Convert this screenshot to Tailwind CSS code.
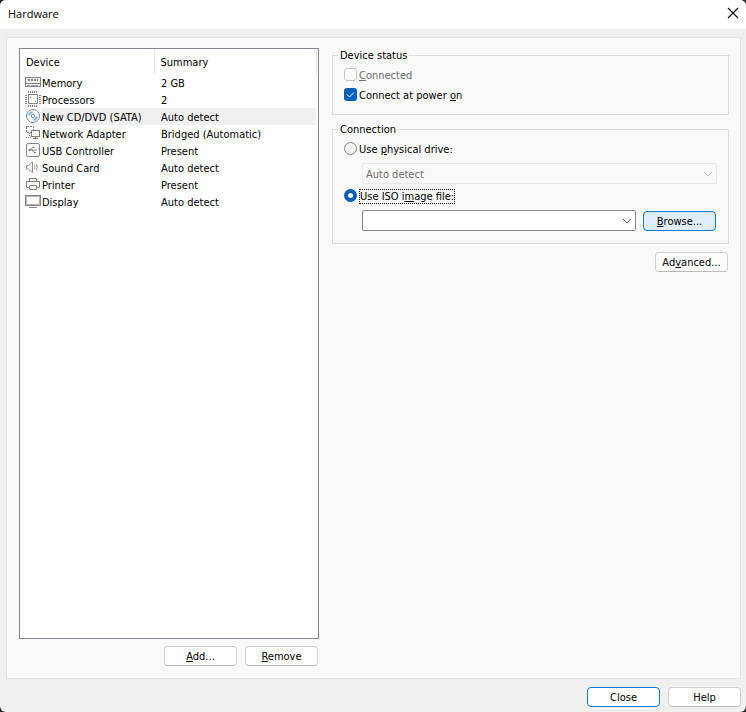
<!DOCTYPE html>
<html lang="en">
<head>
    <meta charset="UTF-8">
    <meta name="viewport" content="width=device-width, initial-scale=1.0">
    <title>Hardware</title>
    <script src="https://cdn.jsdelivr.net/npm/@tailwindcss/browser@4"></script>
</head>
<body class="bg-[#2b2b2b] font-['DejaVu_Sans_Condensed','Noto_Sans',sans-serif] text-[11px] leading-[14px] text-black">

    <div class="min-h-screen flex flex-col bg-[#f0f0f0] rounded-md overflow-hidden">

        <!-- Title bar -->
        <header class="h-[29px] bg-white flex items-center justify-between pl-2 pr-[7px] pb-[3px]">
            <h1 class="pt-[2px] font-['Open_Sans',sans-serif] text-[11px]">Hardware</h1>
            <button type="button" aria-label="Close window">
                <svg class="w-3 h-3" viewBox="0 0 12 12" fill="none" stroke="#111" stroke-width="1.2"><path d="M1 1l10 10M11 1L1 11"/></svg>
            </button>
        </header>

        <!-- Main panel -->
        <main class="flex-1 flex gap-[13px] mt-2 ml-[6px] mr-[5px] pt-[10px] pb-3 pl-3 pr-[11px] bg-[#f9f9f9] border border-[#e5e5e5]">

            <!-- Device list -->
            <section class="w-[300px] shrink-0 flex flex-col">
                <div class="flex-1 bg-white border border-[#828790]">
                    <table class="w-full table-fixed border-collapse text-left">
                        <colgroup>
                            <col class="w-[21px]">
                            <col class="w-[113px]">
                            <col>
                            <col class="w-[2px]">
                        </colgroup>
                        <thead>
                            <tr class="h-[25px]">
                                <th colspan="2" class="p-0 pt-[2px] pl-[6px] font-normal border-r border-[#e5e5e5]">Device</th>
                                <th class="p-0 pt-[2px] pl-[6px] font-normal border-r border-[#e5e5e5]">Summary</th>
                                <th class="p-0"></th>
                            </tr>
                        </thead>
                        <tbody>
                            <tr class="h-[17px]">
                                <td class="p-0 pl-[5px] align-top">
                                    <svg class="w-4 h-4" viewBox="0 0 16 16" fill="none" stroke="#858585" shape-rendering="crispEdges"><path fill="#eee" d="M.5 3.5h15v9H.5z"/><path stroke-width="2" d="M3 6h2M6 6h2M9 6h2M12 6h1"/><path d="M1 9.5h14"/><path stroke="#a5a5a5" d="M2 11.5h3M6 11.5h7"/></svg>
                                </td>
                                <td class="p-0 pt-[2px] pl-[1px] whitespace-nowrap">Memory</td>
                                <td class="p-0 pt-[2px] pl-[7px]">2 GB</td>
                                <td class="p-0"></td>
                            </tr>
                            <tr class="h-[17px]">
                                <td class="p-0 pl-[5px] align-top">
                                    <svg class="w-4 h-4" viewBox="0 0 16 16" fill="none" stroke="#858585" shape-rendering="crispEdges"><path d="M3.5 3.5h9v9h-9z"/><path d="M3.5 0v2M5.5 0v2M7.5 0v2M9.5 0v2M11.5 0v2M3.5 14v2M5.5 14v2M7.5 14v2M9.5 14v2M11.5 14v2M0 4.5h2M0 6.5h2M0 8.5h2M0 10.5h2M0 12.5h2M14 4.5h2M14 6.5h2M14 8.5h2M14 10.5h2M14 12.5h2"/><path d="M5 6.5h1M10 10.5h1"/></svg>
                                </td>
                                <td class="p-0 pt-[2px] pl-[1px] whitespace-nowrap">Processors</td>
                                <td class="p-0 pt-[2px] pl-[7px]">2</td>
                                <td class="p-0"></td>
                            </tr>
                            <tr class="h-[17px]">
                                <td class="p-0 pl-[5px] align-top">
                                    <svg class="w-4 h-4" viewBox="0 0 16 16" fill="none" stroke="#6d8ba6"><circle cx="8" cy="8" r="6.5" fill="#f4f8fb"/><circle cx="8" cy="8" r="1.8"/><path stroke="#8fb0cc" stroke-width="1.5" d="M4 7.500A4.300 4.300 0 0 1 7.500 4M12 8.500A4.300 4.300 0 0 1 8.500 12"/></svg>
                                </td>
                                <td class="p-0 pt-[2px] pl-[1px] whitespace-nowrap bg-[#f0f0f0]">New CD/DVD (SATA)</td>
                                <td class="p-0 pt-[2px] pl-[7px] bg-[#f0f0f0]">Auto detect</td>
                                <td class="p-0"></td>
                            </tr>
                            <tr class="h-[17px]">
                                <td class="p-0 pl-[5px] align-top">
                                    <svg class="w-4 h-4" viewBox="0 0 16 16" fill="none" stroke="#7c7c7c" shape-rendering="crispEdges"><path stroke-dasharray="2 1" d="M1.500 1.500h7v6h-7z"/><path fill="#fff" d="M6.500 5.500h8v6h-8z"/><path d="M10.500 12v2M8 13.500h5"/><path d="M4.500 8v4M1 12.500h5" stroke-dasharray="1 1"/></svg>
                                </td>
                                <td class="p-0 pt-[2px] pl-[1px] whitespace-nowrap">Network Adapter</td>
                                <td class="p-0 pt-[2px] pl-[7px] whitespace-nowrap">Bridged (Automatic)</td>
                                <td class="p-0"></td>
                            </tr>
                            <tr class="h-[17px]">
                                <td class="p-0 pl-[5px] align-top">
                                    <svg class="w-4 h-4" viewBox="0 0 16 16" fill="none" stroke="#858585"><rect x="1.500" y="1.500" width="13" height="13" rx="1.500"/><path d="M4 8h8M5.500 8l2-2.500h2M7 8l2 2.500h2"/><circle cx="4.500" cy="8" r="1.200" fill="#858585" stroke="none"/></svg>
                                </td>
                                <td class="p-0 pt-[2px] pl-[1px] whitespace-nowrap">USB Controller</td>
                                <td class="p-0 pt-[2px] pl-[7px]">Present</td>
                                <td class="p-0"></td>
                            </tr>
                            <tr class="h-[17px]">
                                <td class="p-0 pl-[5px] align-top">
                                    <svg class="w-4 h-4" viewBox="0 0 16 16" fill="none" stroke="#8f8f8f"><path d="M1.500 6.500h2l4-3.500v10.500l-4-3.500h-2z"/><path d="M9.500 6.500q1 1.800 0 3.500M11.500 5q1.500 3.200 0 6.500"/></svg>
                                </td>
                                <td class="p-0 pt-[2px] pl-[1px] whitespace-nowrap">Sound Card</td>
                                <td class="p-0 pt-[2px] pl-[7px]">Auto detect</td>
                                <td class="p-0"></td>
                            </tr>
                            <tr class="h-[17px]">
                                <td class="p-0 pl-[5px] align-top">
                                    <svg class="w-4 h-4" viewBox="0 0 16 16" fill="none" stroke="#7c7c7c"><path d="M4.500 5.500v-3h7v3M4.500 11.500h-3v-6h13v6h-3M4.500 9.500h7v4h-7z"/></svg>
                                </td>
                                <td class="p-0 pt-[2px] pl-[1px] whitespace-nowrap">Printer</td>
                                <td class="p-0 pt-[2px] pl-[7px]">Present</td>
                                <td class="p-0"></td>
                            </tr>
                            <tr class="h-[17px]">
                                <td class="p-0 pl-[5px] align-top">
                                    <svg class="w-4 h-4" viewBox="0 0 16 16" fill="none" stroke="#858585" shape-rendering="crispEdges"><path d="M.5 2.500h15v10H.5zM4 14.500h8"/><path stroke="#b5b5b5" d="M1.500 3.500h13v8h-13z"/></svg>
                                </td>
                                <td class="p-0 pt-[2px] pl-[1px] whitespace-nowrap">Display</td>
                                <td class="p-0 pt-[2px] pl-[7px]">Auto detect</td>
                                <td class="p-0"></td>
                            </tr>
                        </tbody>
                    </table>
                </div>
                <div class="flex justify-end gap-2 mt-[7px] pr-[1px]">
                    <button type="button" class="w-[73px] h-5 pt-[2px] bg-white border border-[#d0d0d0] border-b-[#bcbcbc] rounded"><u>A</u>dd...</button>
                    <button type="button" class="w-[73px] h-5 pt-[2px] bg-white border border-[#d0d0d0] border-b-[#bcbcbc] rounded"><u>R</u>emove</button>
                </div>
            </section>

            <!-- Device settings -->
            <section class="flex-1 min-w-0 flex flex-col">
                <fieldset class="border border-[#dcdcdc] pt-[3px] pb-[9px] px-[11px]">
                    <legend class="-ml-[6px] px-[2px] pt-[2px] leading-[12px]">Device status</legend>
                    <label class="h-5 flex items-center gap-[2px] text-[#6d6d6d]">
                        <input type="checkbox" disabled class="appearance-none w-[13px] h-[13px] mb-[1px] border border-[#c5c5c5] rounded-[3px] bg-[#fbfbfb]">
                        <span class="pt-[2px]"><u>C</u>onnected</span>
                    </label>
                    <label class="h-5 flex items-center gap-[2px]">
                        <span class="relative flex mb-[1px]">
                            <input type="checkbox" checked class="appearance-none w-[13px] h-[13px] rounded-[3px] bg-[#005fb8]">
                            <svg class="absolute inset-0 w-[13px] h-[13px] pointer-events-none" viewBox="0 0 13 13" fill="none" stroke="#fff"><path d="M3 6.500l2.500 2.500L10 4.500"/></svg>
                        </span>
                        <span class="pt-[2px]">Connect at power <u>o</u>n</span>
                    </label>
                </fieldset>

                <fieldset class="mt-[7px] border border-[#dcdcdc] pt-[3px] pb-3 px-[11px]">
                    <legend class="-ml-[6px] px-[2px] pt-[2px] leading-[12px]">Connection</legend>
                    <label class="h-5 flex items-center gap-[2px]">
                        <input type="radio" name="connection" class="appearance-none w-[13px] h-[13px] mb-[1px] rounded-full border border-[#868686] bg-[#f3f3f3] checked:border-4 checked:border-[#005fb8] checked:bg-white">
                        <span class="pt-[2px]">Use <u>p</u>hysical drive:</span>
                    </label>
                    <div class="relative mt-1 ml-[18px]">
                        <select disabled aria-label="Physical drive" class="appearance-none block w-full h-[21px] px-[3px] pt-[2px] border border-[#e8e8e8] rounded-[2px] bg-[#f9f9f9] text-[#6d6d6d] opacity-100">
                            <option>Auto detect</option>
                        </select>
                        <svg class="absolute right-1 top-[6px] w-[10px] h-[10px] pointer-events-none" viewBox="0 0 10 10" fill="none" stroke="#bdbdbd"><path d="M1 3l4 4 4-4"/></svg>
                    </div>
                    <label class="h-5 mt-[2px] flex items-center gap-[2px]">
                        <input type="radio" name="connection" checked class="appearance-none w-[13px] h-[13px] mb-[1px] rounded-full border border-[#868686] bg-[#f3f3f3] checked:border-4 checked:border-[#005fb8] checked:bg-white">
                        <span class="pt-[1px] leading-[12px] border border-dotted border-black">Use ISO i<u>m</u>age file:</span>
                    </label>
                    <div class="mt-1 ml-[18px] flex items-end gap-[7px] pr-[1px]">
                        <div class="relative flex-1">
                            <select aria-label="ISO image file" class="appearance-none block w-full h-[21px] px-[3px] border border-[#868686] rounded-[2px] bg-white">
                                <option></option>
                            </select>
                            <svg class="absolute right-1 top-[6px] w-[10px] h-[10px] pointer-events-none" viewBox="0 0 10 10" fill="none" stroke="#5c5c5c"><path d="M1 3l4 4 4-4"/></svg>
                        </div>
                        <button type="button" class="w-[73px] h-5 pt-[2px] bg-[#e0eef9] border border-[#0078d4] rounded"><u>B</u>rowse...</button>
                    </div>
                </fieldset>

                <div class="flex justify-end mt-2 pr-[1px]">
                    <button type="button" class="w-[73px] h-5 pt-[2px] bg-white border border-[#d0d0d0] border-b-[#bcbcbc] rounded">Ad<u>v</u>anced...</button>
                </div>
            </section>
        </main>

        <!-- Dialog buttons -->
        <footer class="flex justify-end gap-2 pt-2 pb-[5px] pr-[5px]">
            <button type="button" class="w-[73px] h-5 pt-[2px] bg-white border border-[#0078d4] rounded">Close</button>
            <button type="button" class="w-[73px] h-5 pt-[2px] bg-white border border-[#d0d0d0] border-b-[#bcbcbc] rounded">Help</button>
        </footer>
    </div>

</body>
</html>
